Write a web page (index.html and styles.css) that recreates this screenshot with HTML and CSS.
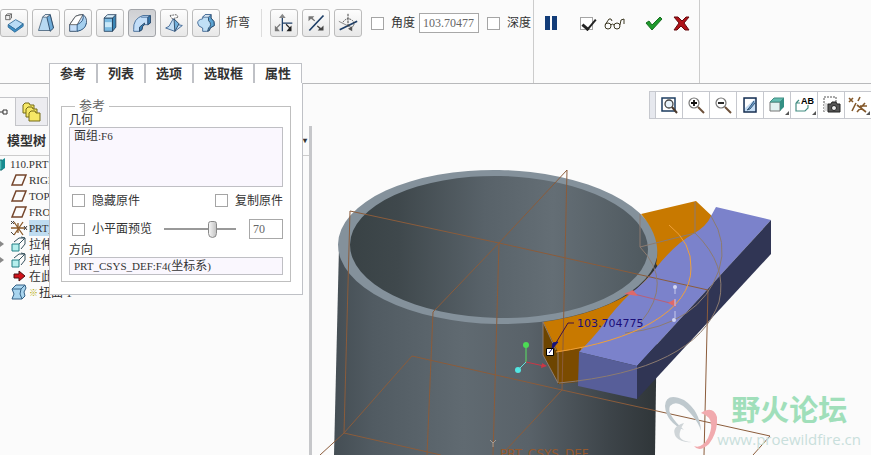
FILE: index.html
```html
<!DOCTYPE html>
<html lang="zh-CN">
<head>
  <meta charset="UTF-8">
  <meta name="viewport" content="width=device-width, initial-scale=1.0">
  <title>折弯</title>
  <link rel="stylesheet" href="styles.css">
</head>
<body>

  <header class="dashboard">
    <div class="dash-main">
      <div class="tools">
        <button class="tool" aria-label="移动"><svg viewBox="0 0 24 24">
          <path d="M2 3l2-2h5v5l-2 2H2z" fill="#eee" stroke="#555"/><path d="M2 3h5v5M7 3l2-2" fill="none" stroke="#555"/>
          <path d="M5 14l9-6 9 5-9 7z" fill="#b9dcf5" stroke="#2c6794"/><path d="M5 14v3l8 6 10-7v-3l-9 7z" fill="#3e91c8" stroke="#2c6794"/></svg></button>
        <button class="tool" aria-label="拔模"><svg viewBox="0 0 24 24">
          <path d="M3 21L8 5l3-3h6l4 16-4 3z" fill="#b7d9f2" stroke="#47617a"/><path d="M13 5l4-3 4 16-4 4z" fill="#6facd9" stroke="#243e5c"/><path d="M8 5l3-3h6l-4 3z" fill="#fff" stroke="#47617a"/></svg></button>
        <button class="tool" aria-label="壳"><svg viewBox="0 0 24 24">
          <path d="M2 14L9 4q4-2 9-2 5 3 4 10-2 8-12 10H2z" fill="#c5def8" stroke="#243e5c"/><path d="M2 14L9 4q4-2 9-2l-7 12z" fill="#fff" stroke="#555"/><path d="M18 2q2 8-7 12v8q10-2 11-10" fill="#a4cfee" stroke="#204a76"/></svg></button>
        <button class="tool" aria-label="拉伸"><svg viewBox="0 0 24 24">
          <path d="M5 6h10v16H5z" fill="#7bbbe2" stroke="#243e5c"/><path d="M6 11h8v6H6z" fill="#c9e8f8"/><path d="M15 6l4-4v15l-4 5z" fill="#3a87b6" stroke="#243e5c"/><path d="M5 6l4-4h10l-4 4z" fill="#d8effc" stroke="#243e5c"/></svg></button>
        <button class="tool active" aria-label="折弯"><svg viewBox="0 0 24 24">
          <path d="M2 20Q1 7 13 3h9v9l-3 2h-4q-3 1-3 6l-3 2H2z" fill="#c3def8" stroke="#36608f"/><path d="M19 5l3-2v9l-3 2zM9 22v-5l6-5v2q-3 1-3 6z" fill="#3981b8" stroke="#243e5c"/><path d="M11 5h8v9" fill="none" stroke="#36608f"/></svg></button>
        <button class="tool" aria-label="扭曲"><svg viewBox="0 0 24 24">
          <path d="M7 3l8-1 2 3-7 2z" fill="#fff" stroke="#444" stroke-dasharray="2 1"/><path d="M11 7L6 16l-4 2 11 4 9-7-5-1z" fill="#c5e0f6" stroke="#345c8b"/><path d="M12 7l1 15 5-9z" fill="#72b0dc" stroke="#243e5c"/></svg></button>
        <button class="tool" aria-label="骨架折弯"><svg viewBox="0 0 24 24">
          <path d="M8 5l3-3h7v4q5 4 4 9l-5 3-1 3-3 1H8v-4q-6-2-6-6t6-5z" fill="#c0e0f6" stroke="#345c8b"/><path d="M15 5l3-3v4q5 4 4 9l-5 3-1 3-2 1 1-4q5-4 0-9z" fill="#5ba3d3" stroke="#243e5c"/><path d="M8 5l3-3h7l-3 3z" fill="#edf8ff" stroke="#345c8b"/></svg></button>
        <span class="tool-name">折弯</span>
        <button class="tool" aria-label="移除轴"><svg viewBox="0 0 24 24">
          <path d="M10 22V5M10 12h12" stroke="#1c3d66" stroke-width="1.5"/><path d="M6 6l4-5 4 5z" fill="#888"/><path d="M1 22v-7l2 2 4-4 1 1-4 4 3 4z" fill="#777"/><path d="M21 22v-7l-2 2-4-4-1 1 4 4-3 4z" fill="#222"/></svg></button>
        <button class="tool" aria-label="反向"><svg viewBox="0 0 24 24">
          <path d="M4 21L21 3" stroke="#1c3d66" stroke-width="2"/><path d="M3 4h7L8 6l3 3-1 1-4-3-3 3z" fill="#777"/><path d="M21 21h-7l2-2-3-3 1-1 4 3 3-3z" fill="#444"/></svg></button>
        <button class="tool" aria-label="绕轴旋转"><svg viewBox="0 0 24 24">
          <path d="M2 20l21-10" stroke="#1c3d66" stroke-width="2"/><path d="M1 10l16 8" stroke="#777"/><path d="M12 1v16" stroke="#222" stroke-dasharray="3 1"/><path d="M6 11q4-6 10-3 6 4 1 9l-3 2" fill="none" stroke="#333" stroke-dasharray="2 1"/><path d="M12 19l5-3v6z" fill="#555"/></svg></button>
        <label class="check check-angle"><input type="checkbox">角度</label>
        <input class="field angle" type="text" value="103.70477" aria-label="角度值">
        <label class="check"><input type="checkbox">深度</label>
      </div>
      <nav class="tabs">
        <button>参考</button>
        <button>列表</button>
        <button>选项</button>
        <button>选取框</button>
        <button>属性</button>
      </nav>
    </div>
    <div class="dash-confirm">
      <button class="plain pause" aria-label="暂停"><svg width="12" height="14"><path d="M0 0h5v14H0zM7 0h5v14H7z" fill="#123c78"/></svg></button>
      <label class="preview"><input type="checkbox" checked aria-label="预览"><svg width="21" height="13" viewBox="0 0 21 13" fill="none" stroke="#3c3822">
        <circle cx="4" cy="9" r="3"/><circle cx="13" cy="9" r="3"/><path d="M7 8q1-2 3 0M1 8l4-6 2 0 1 2M16 8l1-5 3-1v5"/></svg></label>
      <button class="plain ok" aria-label="确定"><svg width="18" height="15" viewBox="0 0 18 15"><path d="M1 7l3-2 3 4 8-8 2 2L7 14z" fill="#1e9a2c" stroke="#176e20"/></svg></button>
      <button class="plain" aria-label="取消"><svg width="17" height="15" viewBox="0 0 17 15"><path d="M1 1h4l4 4 4-4h3l-5 6 5 7h-4l-4-4-4 4H1l5-7z" fill="#b01218" stroke="#650a0e"/></svg></button>
    </div>

    <section class="panel">
      <fieldset>
        <legend>参考</legend>
        <div class="caption">几何</div>
        <div class="collector tall">面组<span class="latin">:F6</span></div>
        <div class="row row-copy">
          <label class="check"><input type="checkbox">隐藏原件</label>
          <label class="check"><input type="checkbox">复制原件</label>
        </div>
        <div class="row row-facet">
          <label class="check"><input type="checkbox">小平面预览</label>
          <input type="range" min="0" max="100" value="70" aria-label="预览质量">
          <input class="field quality" type="text" value="70" aria-label="质量">
        </div>
        <div class="caption">方向</div>
        <div class="collector"><span class="latin">PRT_CSYS_DEF:F4(</span>坐标系<span class="latin">)</span></div>
      </fieldset>
    </section>
  </header>

  <main class="workspace">
    <aside class="sidebar">
      <div class="side-tabs">
        <button class="side-tab current" aria-label="模型树"><svg width="16" height="20"><path d="M0 10h3M3 8h4v4H3z" fill="none" stroke="#333"/></svg></button>
        <button class="side-tab" aria-label="文件夹"><svg width="20" height="20" viewBox="0 0 20 20" fill="#f6e866" stroke="#756b16">
          <path d="M1 3l2-2h4l1 2h4v8H1z"/><path d="M4 7l2-2h4l1 2h4v8H4z"/><path d="M7 11l2-2h4l1 2h4v8H7z"/></svg></button>
      </div>
      <div class="side-body">
        <h2>模型树<span class="more">▾</span></h2>
        <ul class="tree">
          <li class="root"><svg viewBox="0 0 18 16"><path d="M8 4h6v10H8z" fill="#49bcb9" stroke="#156a6e"/><path d="M14 4l3-2v10l-3 2z" fill="#168c91"/></svg><span class="latin">110.PRT</span></li>
          <li><svg viewBox="0 0 18 16"><path d="M6 3h10l-4 10H2z" fill="none" stroke="#75452b" stroke-width="1.5"/></svg><span class="latin">RIGHT</span></li>
          <li><svg viewBox="0 0 18 16"><path d="M6 3h10l-4 10H2z" fill="none" stroke="#75452b" stroke-width="1.5"/></svg><span class="latin">TOP</span></li>
          <li><svg viewBox="0 0 18 16"><path d="M6 3h10l-4 10H2z" fill="none" stroke="#75452b" stroke-width="1.5"/></svg><span class="latin">FRONT</span></li>
          <li class="selected"><svg viewBox="0 0 18 16"><path d="M1 8h15M4 2l9 13M13 2L4 15M8 3v10" stroke="#8b5b2b" stroke-width="1.3"/><path d="M1 1l3 3M4 1L1 4M14 6l3 4M17 6l-3 4M1 12l3 3" stroke="#444"/></svg><span class="latin">PRT_CSYS</span></li>
          <li class="branch"><svg viewBox="0 0 18 16"><path d="M2 8h7v7H2z" fill="#b5efed" stroke="#237f85"/><path d="M4 6l5-4h6v6l-4 5M15 2L9 8M11 1l4 1" fill="none" stroke="#35505d"/></svg>拉伸 1</li>
          <li class="branch"><svg viewBox="0 0 18 16"><path d="M2 8h7v7H2z" fill="#b5efed" stroke="#237f85"/><path d="M4 6l5-4h6v6l-4 5M15 2L9 8M11 1l4 1" fill="none" stroke="#35505d"/></svg>拉伸 2</li>
          <li><svg viewBox="0 0 18 16"><path d="M4 6h5V3l6 5-6 5v-3H4z" fill="#d1121b" stroke="#4b1012"/></svg>在此插入</li>
          <li><svg viewBox="0 0 18 16"><path d="M2 5l4-4h9l1 3-2 4 1 4-3 3H2l2-5z" fill="#a9d5ef" stroke="#346085"/><path d="M2 5h9l4-4M11 5l-1 5 2 5" fill="none" stroke="#346085"/></svg><span class="star">※</span>扭曲 1</li>
        </ul>
      </div>
    </aside>

    <section class="viewport">
      <svg class="scene" viewBox="312 84 559 371" preserveAspectRatio="xMinYMin slice">
        <defs>
          <linearGradient id="wall">
            <stop offset="0" stop-color="#454e54"/><stop offset="0.12" stop-color="#515b62"/><stop offset="0.4" stop-color="#606a71"/>
            <stop offset="0.6" stop-color="#596269"/><stop offset="0.85" stop-color="#3d4449"/><stop offset="1" stop-color="#2f3538"/>
          </linearGradient>
          <linearGradient id="bore">
            <stop offset="0" stop-color="#394245"/><stop offset="0.16" stop-color="#3f484c"/><stop offset="0.45" stop-color="#586269"/>
            <stop offset="0.68" stop-color="#646e75"/><stop offset="1" stop-color="#4f595f"/>
          </linearGradient>
        </defs>

        <!-- tube -->
        <path d="M339 247L334 455H655L658 247z" fill="url(#wall)"/>
        <ellipse cx="498" cy="247" rx="160" ry="77" fill="#84919b" transform="rotate(1 498 247)"/>
        <ellipse cx="499" cy="247" rx="149" ry="71" fill="url(#bore)" transform="rotate(1 499 247)"/>

        <!-- bent preview -->
        <path d="M641 214L696 201L714 218L662 272L656 264Q662 238 641 214z" fill="#c87900"/>
        <path d="M543 322Q600 314 637 289L655 270L662 275L604 330L580 352L556 352z" fill="#c87900"/>
        <path d="M543 322L558 352V383L543 355z" fill="#6d4500"/>
        <path d="M558 352L581 348L578 382L558 384z" fill="#7b4b00"/>

        <!-- straight bar -->
        <path d="M716 207L771 220L637 366L579 352Q594 337 603 325Q616 307 630 294Q647 281 656 268Q675 244 693 234Q707 226 711 216z" fill="#7b82cb"/>
        <path d="M579 352L637 366V399L578 386z" fill="#575e99"/>
        <path d="M771 220V254L637 399V366z" fill="#303554"/>

        <!-- datum planes -->
        <g fill="none" stroke="#8b5c3b">
          <path d="M320 455L344 433L412 356L562 390L770 436L753 455"/>
          <path d="M344 433L350 211L499 243L708 290L704 455"/>
          <path d="M344 433L441 455M499 243L493 455"/>
          <path d="M567 170L499 243L433 312L427 455M567 170L562 390L506 450"/>
        </g>
        <g fill="none" stroke="#8c7b70">
          <path d="M640 214V247L695 233V202M695 233Q728 265 719 302Q696 370 559 383"/>
          <path d="M711 216Q728 242 719 270Q700 325 625 333M640 247Q674 282 641 322"/>
          <path d="M543 322V355L558 383V352M543 322L556 350"/>
        </g>
        <path d="M669 225Q692 243 691 268Q691 300 651 323Q616 343 556 352" fill="none" stroke="#f0a039"/>
        <path d="M630 293L674 304" stroke="#b85f78"/>
        <path d="M624 294L633 290L638 296zM668 303L675 299L676 307z" fill="#df6969"/>
        <path d="M675 287V320" stroke="#c8cbee" stroke-dasharray="7 5"/>
        <circle cx="675" cy="287" r="2" fill="#d4d7f2"/><circle cx="674" cy="320" r="2" fill="#d4d7f2"/>

        <!-- spin center -->
        <path d="M526 362V345" stroke="#5be362"/><path d="M526 362L544 366" stroke="#cc3645"/><path d="M526 362L518 370" stroke="#62e4df"/>
        <circle cx="526" cy="345" r="3" fill="#4cdc54"/><circle cx="518" cy="370" r="3" fill="#52e6e2"/><path d="M542 363L547 366L541 368z" fill="#cc3645"/>

        <!-- angle handle -->
        <path d="M551 351L568 323H574" fill="none" stroke="#411044"/>
        <path d="M552 349L553 343L558 342z" fill="#16127b" stroke="#16127b"/>
        <path d="M546.500 348.500h7v7h-7z" fill="#fff" stroke="#000"/><path d="M549 353l3-4" stroke="#16127b"/>
        <text class="angle-text" x="577" y="327">103.704775</text>
        <text class="csys-text" x="500" y="458">PRT_CSYS_DEF</text>
        <path d="M490 440l3 3 3-3M493 443v4" fill="none" stroke="#a79c92"/>
      </svg>

      <div class="view-tools">
        <button aria-label="重新调整"><svg viewBox="0 0 20 20"><path d="M3 3h13v13H3z" fill="#fff" stroke="#1d3d60" stroke-width="1.5"/><circle cx="10" cy="9" r="4" fill="#e8f3fb" stroke="#444" stroke-width="1.3"/><path d="M13 12l5 6" stroke="#4b3a2d" stroke-width="2"/></svg></button>
        <button aria-label="放大"><svg viewBox="0 0 20 20"><circle cx="8" cy="8" r="5" fill="#fff" stroke="#777" stroke-width="1.2"/><path d="M5 8h6M8 5v6" stroke="#111" stroke-width="1.8"/><path d="M12 12l6 6" stroke="#6c5039" stroke-width="2"/></svg></button>
        <button aria-label="缩小"><svg viewBox="0 0 20 20"><circle cx="8" cy="8" r="5" fill="#fff" stroke="#777" stroke-width="1.2"/><path d="M5 8h6" stroke="#111" stroke-width="1.8"/><path d="M12 12l6 6" stroke="#6c5039" stroke-width="2"/></svg></button>
        <button aria-label="重画"><svg viewBox="0 0 20 20"><path d="M4 3h12v14H4z" fill="#c4dcf3" stroke="#172f52" stroke-width="1.5"/><path d="M5 4h10L5 13z" fill="#fff"/><path d="M14 6l-5 7-2 2 3-1 5-6" fill="#6b9dcd" stroke="#36597c"/></svg></button>
        <button class="drop" aria-label="显示样式"><svg viewBox="0 0 20 20"><path d="M3 7h10v9H3z" fill="#e2f2f0" stroke="#777"/><path d="M3 7l4-4h10l-4 4z" fill="#65bdb1" stroke="#438d82"/><path d="M13 7l4-4v9l-4 4z" fill="#328f83"/></svg></button>
        <button class="drop" aria-label="已命名视图"><svg viewBox="0 0 20 20"><path d="M2 8l3-3M2 8h4M2 8v8h9l3-3v-3" fill="none" stroke="#438d82" stroke-width="1.2"/><text x="7" y="9">AB</text></svg></button>
        <button aria-label="视图管理器"><svg viewBox="0 0 20 20"><path d="M3 17V2h12v5" fill="none" stroke="#555" stroke-dasharray="2 1"/><path d="M3 8h4v8H3z" fill="#ddd"/><path d="M7 9h3l1-2h4l1 2h3v8H7z" fill="#555" stroke="#222"/><circle cx="13" cy="13" r="2.5" fill="#eee" stroke="#222"/></svg></button>
        <button class="drop" aria-label="基准显示"><svg viewBox="0 0 20 20"><path d="M1 3l4 4M5 3L1 7M12 2l-2 4M8 8l-4 8M9 10l9 7M17 8l-8 9M12 11h7" stroke="#84592c" stroke-width="1.6"/></svg></button>
      </div>

      <div class="watermark">
        <svg width="56" height="64" viewBox="0 0 56 64" fill="none">
          <path d="M40 40Q39 20 23 9 5 1 4 15q1 16 19 24Q5 23 9 15q8-8 21 8 8 9 10 17z" fill="#bfc9ce"/>
          <path d="M23 32q-14 4-8 14 5 6 16 5-15-1-12-10 1-5 4-9z" fill="#cfd5d8"/>
          <path d="M40 22q12-8 16 4 1 15-8 27-10 9-15 2 8 3 14-8 9-20-7-25z" fill="#f1aaae"/>
        </svg>
        <div class="brand"><strong>野火论坛</strong><a href="#">www.proewildfire.cn</a></div>
      </div>
    </section>
  </main>

</body>
</html>
```
FILE: styles.css
```css
* {
  box-sizing: border-box;
}

body {
  margin: 0;
  height: 100vh;
  display: flex;
  flex-direction: column;
  overflow: hidden;
  background: #fbfbfb;
  color: #333;
  font: 12px "Liberation Serif", "Noto Sans CJK SC", serif;
}

button,
input {
  margin: 0;
  padding: 0;
  font: inherit;
  color: inherit;
}

/* dashboard */
.dashboard {
  position: relative;
  z-index: 2;
  display: flex;
  flex: none;
  border-bottom: 1px solid #b8b9bb;
}

.dash-main {
  width: 533px;
  flex: none;
}

.tools {
  display: flex;
  align-items: center;
  gap: 4px;
  height: 54px;
  padding-bottom: 26px;
  margin-top: 9px;
  white-space: nowrap;
}

.tool {
  width: 28px;
  height: 28px;
  flex: none;
  display: flex;
  align-items: center;
  justify-content: center;
  border: 1px solid #bcbcbc;
  border-radius: 3px;
  background: linear-gradient(#fdfdfd, #e8e8e8);
}

.tool svg {
  width: 20px;
  height: 20px;
  flex: none;
}

.tool.active {
  border-color: #a2a4a8;
  background: linear-gradient(#cfd0d3, #e2e3e5);
}

.tool-name {
  width: 38px;
  margin-right: 4px;
  padding-left: 2px;
  border-right: 1px solid #ddd;
  line-height: 28px;
}

.check {
  display: flex;
  align-items: center;
  gap: 7px;
  line-height: 16px;
}

.check-angle {
  margin-left: 5px;
}

input[type="checkbox"] {
  appearance: none;
  position: relative;
  width: 13px;
  height: 13px;
  flex: none;
  border: 1px solid #a5a5a5;
  background: #fff;
}

input[type="checkbox"]:checked::before {
  content: "";
  position: absolute;
  left: 4px;
  top: -2px;
  width: 6px;
  height: 11px;
  border: solid #222;
  border-width: 0 2px 3px 0;
  transform: rotate(40deg);
}

.field {
  height: 20px;
  padding-left: 3px;
  border: 1px solid #a8a8a8;
  background: #fff;
  color: #666;
}

.angle {
  width: 60px;
  margin-right: 4px;
}

.tabs {
  display: flex;
  margin-left: 49px;
  height: 20px;
}

.tabs button {
  padding: 0 10px;
  border: 1px solid #bfc1c6;
  border-width: 1px 0 0 2px;
  background: #fff;
  font-size: 13px;
  font-weight: bold;
  line-height: 18px;
}

.tabs button:first-child {
  border-left-width: 1px;
}

.tabs button:last-child {
  border-right-width: 1px;
}

.dash-confirm {
  width: 167px;
  flex: none;
  display: flex;
  align-items: center;
  padding: 0 9px 37px 11px;
  border: solid #ccc;
  border-width: 0 1px;
}

.plain {
  display: flex;
  border: 0;
  background: none;
}

.pause {
  margin-right: 23px;
}

.preview {
  display: flex;
  align-items: center;
  gap: 11px;
}

.ok {
  margin: 0 10px 0 auto;
}

/* slide-down panel of the first tab */
.panel {
  position: absolute;
  left: 49px;
  top: 100%;
  width: 254px;
  padding: 15px 11px 12px;
  border: 1px solid #bfc1c6;
  border-top: 0;
  background: #fff;
}

fieldset {
  margin: 0;
  padding: 0 7px 6px;
  border: 1px solid #bfbfbf;
}

legend {
  margin-left: 6px;
  padding: 0 4px;
  color: #666;
  font-size: 13px;
  line-height: 16px;
}

.caption {
  line-height: 13px;
}

.collector {
  height: 18px;
  padding-left: 4px;
  border: 1px solid #bfbfc4;
  background: #faf7fe;
  line-height: 16px;
  white-space: nowrap;
}

.collector.tall {
  height: 60px;
}

.latin {
  font-size: 11px;
}

.row {
  display: flex;
  align-items: center;
  padding-left: 3px;
}

.row-copy {
  height: 27px;
  justify-content: space-between;
}

.row-facet {
  height: 30px;
}

input[type="range"] {
  appearance: none;
  width: 72px;
  height: 18px;
  margin: 0 13px 0 auto;
  background: linear-gradient(#999, #999) center / 100% 2px no-repeat;
}

input[type="range"]::-webkit-slider-thumb {
  appearance: none;
  width: 9px;
  height: 17px;
  border: 1px solid #888;
  border-radius: 3px 3px 5px 5px;
  background: linear-gradient(90deg, #f4f4f4, #c4c4c4);
}

.quality {
  width: 34px;
}

/* model tree */
.workspace {
  display: flex;
  flex: 1;
  min-height: 0;
}

.sidebar {
  width: 312px;
  flex: none;
  display: flex;
  flex-direction: column;
  padding-top: 13px;
}

.side-tabs {
  display: flex;
  height: 29px;
}

.side-tab {
  width: 32px;
  display: flex;
  align-items: center;
  justify-content: center;
  border: 1px solid #c4c5c9;
  border-left-width: 0;
  background: #ececf0;
}

.side-tab.current {
  width: 16px;
  border-bottom: 0;
  background: none;
}

.side-body {
  flex: 1;
  border-right: 3px solid #c6c7ca;
}

.sidebar h2 {
  display: flex;
  justify-content: space-between;
  margin: 0;
  padding: 0 2px 0 7px;
  border-bottom: 1px solid #ccc;
  font-size: 13px;
  line-height: 29px;
}

.side-body h2 .more {
  font-size: 8px;
}

.tree {
  margin: 0;
  padding: 0;
  list-style: none;
}

.tree li {
  position: relative;
  display: flex;
  align-items: center;
  gap: 1px;
  height: 16px;
  padding-left: 10px;
  white-space: nowrap;
}

.tree .root {
  padding-left: 0;
  margin-left: -12px;
  gap: 4px;
}

.tree svg {
  width: 18px;
  height: 16px;
  flex: none;
}

.tree .selected .latin {
  background: #bfdcf0;
  line-height: 16px;
}

.tree .branch::before {
  content: "";
  position: absolute;
  left: 0;
  border: solid transparent;
  border-width: 3px 0 3px 4px;
  border-left-color: #888;
}

.star {
  width: 9px;
  color: #b3a800;
  font-size: 9px;
}

/* graphics window */
.viewport {
  position: relative;
  flex: 1;
  min-width: 0;
  overflow: hidden;
}

.scene {
  display: block;
  width: 100%;
  height: 100%;
}

.angle-text {
  font: 11px "DejaVu Sans", sans-serif;
  fill: #1c0e78;
}

.csys-text {
  font: 12px "DejaVu Sans", sans-serif;
  fill: #96592d;
}

.view-tools {
  position: absolute;
  top: 7px;
  right: 0;
  display: flex;
  padding-left: 5px;
  border: 1px solid #c6c8ce;
  border-right: 0;
  background: #e6e8ee;
}

.view-tools button {
  position: relative;
  width: 27px;
  height: 26px;
  padding: 3px;
  border: 0;
  border-left: 1px solid #c6c8ce;
  background: #fff;
}

.view-tools svg {
  display: block;
  width: 20px;
  height: 20px;
}

.view-tools text {
  font: bold 9px "Liberation Sans", sans-serif;
}

.view-tools .drop::after {
  content: "";
  position: absolute;
  right: 1px;
  bottom: 3px;
  border: 2px solid #555;
  border-top-color: transparent;
  border-left-color: transparent;
}

.watermark {
  position: absolute;
  right: 10px;
  bottom: 0;
  display: flex;
}

.brand {
  display: flex;
  flex-direction: column;
  align-items: center;
  font-family: "Open Sans", "Noto Sans CJK SC", sans-serif;
}

.brand strong {
  color: #a0dfba;
  font-size: 29px;
  line-height: 38px;
}

.brand a {
  color: #c9dfdc;
  font-size: 15px;
  line-height: 20px;
  text-decoration: none;
}
```
